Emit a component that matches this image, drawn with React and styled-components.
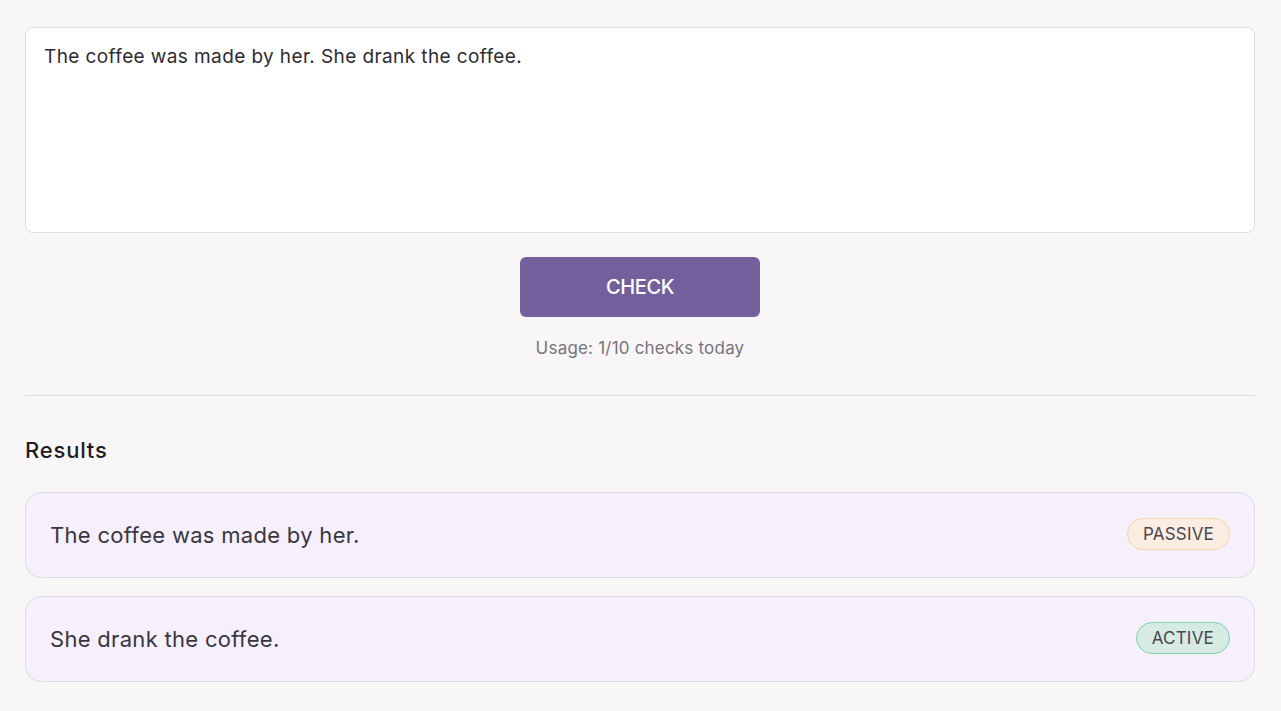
import React, { useState } from "react";
import styled, { createGlobalStyle } from "styled-components";

const GlobalStyle = createGlobalStyle`
  body {
    margin: 0;
    background: #f8f6f7;
    font-family: "Inter", "Noto Sans", sans-serif;
    color: #2e2b33;
  }
`;

const results = [
  { text: "The coffee was made by her.", voice: "passive" },
  { text: "She drank the coffee.", voice: "active" },
];

function App() {
  const [text, setText] = useState(
    "The coffee was made by her. She drank the coffee."
  );

  return (
    <Page>
      <GlobalStyle />
      <Editor value={text} onChange={(e) => setText(e.target.value)} />
      <Actions>
        <CheckButton type="button">CHECK</CheckButton>
        <Usage>Usage: 1/10 checks today</Usage>
      </Actions>
      <Divider />
      <Heading>Results</Heading>
      <ResultList>
        {results.map((r) => (
          <ResultCard key={r.text}>
            <Sentence>{r.text}</Sentence>
            <Badge $voice={r.voice}>{r.voice.toUpperCase()}</Badge>
          </ResultCard>
        ))}
      </ResultList>
    </Page>
  );
}

export default App;

const Page = styled.div`
  display: flex;
  flex-direction: column;
  padding: 27px 26px 28px 25px;
`;

const Editor = styled.textarea`
  box-sizing: border-box;
  width: 100%;
  height: 206px;
  resize: none;
  padding: 15px 18px 14px;
  border: 1px solid #dedbe3;
  border-radius: 8px;
  background: #ffffff;
  font-family: "Inter", sans-serif;
  font-size: 19px;
  letter-spacing: 0.4px;
  line-height: 28px;
  color: #2e2b33;
  outline: none;
`;

const Actions = styled.div`
  display: flex;
  flex-direction: column;
  align-items: center;
  margin-top: 24px;
`;

const CheckButton = styled.button`
  width: 240px;
  height: 60px;
  border: none;
  border-radius: 6px;
  background: #735f9c;
  color: #ffffff;
  font-family: "Inter", sans-serif;
  font-size: 20px;
  font-weight: 500;
  letter-spacing: -0.4px;
  cursor: pointer;
`;

const Usage = styled.div`
  margin-top: 21px;
  font-size: 17px;
  letter-spacing: 0.2px;
  color: #77737c;
`;

const Divider = styled.hr`
  width: 100%;
  margin: 37px 0 0;
  border: none;
  border-top: 1px solid #dcd8e2;
`;

const Heading = styled.h2`
  margin: 41px 0 0;
  font-size: 22px;
  font-weight: 500;
  letter-spacing: 0.8px;
  color: #1f1d23;
`;

const ResultList = styled.div`
  display: flex;
  flex-direction: column;
  gap: 18px;
  margin-top: 29px;
`;

const ResultCard = styled.div`
  box-sizing: border-box;
  height: 86px;
  display: flex;
  align-items: center;
  justify-content: space-between;
  padding: 0 24px 0 24px;
  border: 1px solid #dfdbe6;
  border-radius: 16px;
  background: #f5f0fb;
`;

const Sentence = styled.span`
  font-size: 22px;
  letter-spacing: 0.3px;
  color: #3a3640;
`;

const Badge = styled.span`
  box-sizing: border-box;
  height: 32px;
  display: inline-flex;
  align-items: center;
  margin-top: -3px;
  padding: 0 15px;
  border-radius: 16px;
  font-size: 17px;
  letter-spacing: 0.2px;
  color: #4a4650;
  background: ${(p) => (p.$voice === "passive" ? "#fbede1" : "#d6ebe4")};
  border: 1px solid
    ${(p) => (p.$voice === "passive" ? "#f5d7a8" : "#85d1ad")};
`;
